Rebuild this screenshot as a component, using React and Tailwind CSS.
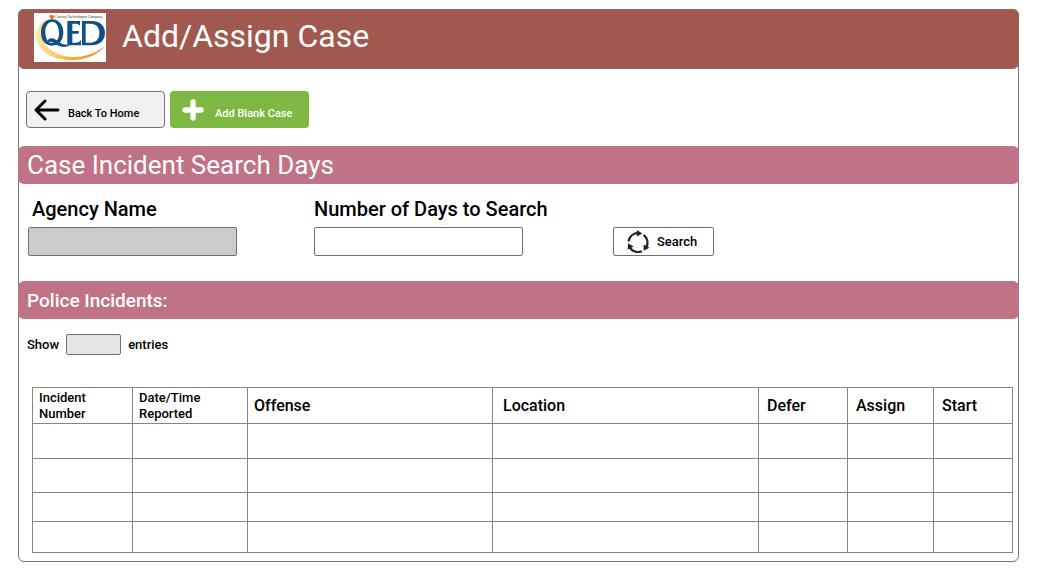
import React from "react";

function QedLogo() {
  return (
    <svg viewBox="0 0 216 147" className="h-[49px] w-[72px] shrink-0 bg-white" role="img" aria-label="QED, a Century Technologies Company">
      <defs>
        <linearGradient id="swoosh" x1="0" x2="1" y1="0" y2="0">
          <stop offset="0" stopColor="#fbe9a8" />
          <stop offset="0.5" stopColor="#f8b133" />
          <stop offset="1" stopColor="#ee7d22" />
        </linearGradient>
      </defs>
      <path d="M40 16C4 36-4 76 20 106c38 48 150 50 195-9-46 44-134 48-174 6C14 74 18 40 40 16Z" fill="url(#swoosh)" />
      <path d="M47 7c3-4 7-1 8 1 3-3 7-1 6 3-1 4-5 6-8 8-4-3-8-7-6-12Z" fill="#f0702a" />
      <text x="63" y="14" fontSize="10" fill="#333" fontFamily="Liberation Sans, sans-serif">Century Technologies Company</text>
      <path fillRule="evenodd" d="M54 19c21 0 34 17 34 39S76 98 54 98 21 80 21 58s12-39 33-39Zm-1 7c-13 3-20 15-19 33 1 19 9 32 22 31 13-2 20-14 19-33-1-18-9-32-22-31Z" fill="#124f86" />
      <path d="M50 76c16-2 22 14 40 18 8 2 14 1 20-1-10 12-29 10-41 3-11-7-17-11-28-9-1-6 3-10 9-11Z" fill="#124f86" />
      <path d="M100 24h38v14c-4-5-9-6-14-6h-9v22h19v8h-19v27h9c8 0 13-2 17-8v16h-41Z" fill="#124f86" />
      <path fillRule="evenodd" d="M144 24h29c27 0 40 15 40 36 0 22-15 37-42 37h-27Zm11 8v57h13c18 0 28-10 28-29 0-17-9-28-27-28Z" fill="#124f86" />
    </svg>
  );
}

function BackArrow() {
  return (
    <svg viewBox="0 0 26 22" className="h-[22px] w-[26px] shrink-0" fill="none" stroke="#000" strokeWidth="2.9" strokeLinecap="round" strokeLinejoin="round" aria-hidden="true">
      <path d="M24 11H2M11 2 2 11l9 9" />
    </svg>
  );
}

function Plus() {
  return (
    <svg viewBox="0 0 22 22" className="h-[22px] w-[22px] shrink-0" fill="none" stroke="#fff" strokeWidth="5.4" strokeLinecap="round" aria-hidden="true">
      <path d="M11 3v16M3 11h16" />
    </svg>
  );
}

function Cycle() {
  return (
    <svg viewBox="0 0 24 24" className="h-6 w-6 shrink-0" aria-hidden="true">
      {["rotate(0 12 12.5)", "rotate(120 12 12.5)", "rotate(240 12 12.5)"].map((turn) => (
        <g key={turn} transform={turn}>
          <path d="M2.6 11.5A9.6 9.6 0 0 1 12.5 2.9" fill="none" stroke="#222" strokeWidth="2.2" />
          <path d="M10.8 0 16.4 3.4 10.8 6.6Z" fill="#222" />
        </g>
      ))}
    </svg>
  );
}

const columns = [
  { name: "Incident Number", width: "w-[100px]", cell: "pl-[6px] text-[13px] leading-4" },
  { name: "Date/Time Reported", width: "w-[115px]", cell: "pl-[6px] text-[13px] leading-4" },
  { name: "Offense", width: "w-[245px]", cell: "pl-[6px] text-base" },
  { name: "Location", width: "", cell: "pl-[10px] text-base" },
  { name: "Defer", width: "w-[89px]", cell: "pl-[8px] text-base" },
  { name: "Assign", width: "w-[86px]", cell: "pl-[8px] text-base" },
  { name: "Start", width: "w-[79px]", cell: "pl-[8px] text-base" },
];

const rows = ["h-[35px]", "h-[34px]", "h-[29px]", "h-[31px]"];

export default function App() {
  return (
    <main className="min-h-screen bg-white pt-[9px] pr-[26px] pb-6 pl-[18px] font-['Roboto',sans-serif] font-medium text-black">
      <div className="rounded-md border border-[#777] pb-2">
        <header className="-mx-px -mt-px flex h-[60px] items-center gap-4 rounded-md border border-[#8f6a64] bg-[#a1584e] pb-1 pl-[15px]">
          <QedLogo />
          <h1 className="pb-[2px] text-[32px] leading-10 font-normal text-white">Add/Assign Case</h1>
        </header>

        <nav className="mt-[22px] flex gap-[5px] pl-[7px] text-[11px]">
          <button type="button" className="flex h-[37px] w-[139px] items-center gap-2 rounded border border-[#707070] bg-[#f1f1f1] pl-[7px]">
            <BackArrow />
            <span className="pt-[10px]">Back To Home</span>
          </button>
          <button type="button" className="flex h-[37px] w-[139px] items-center gap-[11px] rounded bg-[#7eb742] pl-3 text-white">
            <Plus />
            <span className="pt-[10px]">Add Blank Case</span>
          </button>
        </nav>

        <h2 className="-mx-px mt-[18px] flex h-[38px] items-center rounded-md bg-[#c07286] pl-[9px] text-[26px] font-normal text-white">
          Case Incident Search Days
        </h2>

        <form className="flex items-end pt-[13px] pl-[9px]" onSubmit={(e) => e.preventDefault()}>
          <div className="flex w-[286px] flex-col gap-[5px]">
            <label htmlFor="agency" className="pl-1 text-xl leading-[25px]">Agency Name</label>
            <input id="agency" type="text" className="h-[29px] w-[209px] rounded-xs border border-[#707070] bg-[#cbcbcb] px-2" />
          </div>
          <div className="flex w-[299px] flex-col gap-[5px]">
            <label htmlFor="days" className="text-xl leading-[25px]">Number of Days to Search</label>
            <input id="days" type="text" className="h-[29px] w-[209px] rounded-xs border border-[#707070] bg-white px-2" />
          </div>
          <button type="submit" className="flex h-[29px] w-[101px] items-center gap-[7px] rounded-xs border border-[#707070] bg-white pl-3 text-[13px]">
            <Cycle />
            Search
          </button>
        </form>

        <h2 className="-mx-px mt-[25px] flex h-[38px] items-center rounded-md bg-[#c07286] pt-[2px] pl-[9px] text-[19px] font-medium text-white">
          Police Incidents:
        </h2>

        <label className="mt-[15px] flex items-center gap-[7px] pl-2 text-[13px]">
          Show
          <select className="h-[21px] w-[55px] appearance-none rounded-xs border border-[#707070] bg-[#e5e5e5]" />
          entries
        </label>

        <div className="mt-8 pr-[5px] pl-[13px]">
          <table className="w-full table-fixed border-collapse">
            <thead>
              <tr className="h-9">
                {columns.map((c) => (
                  <th key={c.name} scope="col" className={`border border-[#858585] p-0 text-left font-medium ${c.width} ${c.cell}`}>
                    {c.name}
                  </th>
                ))}
              </tr>
            </thead>
            <tbody>
              {rows.map((height, i) => (
                <tr key={i} className={height}>
                  {columns.map((c) => (
                    <td key={c.name} className="border border-[#858585] p-0" />
                  ))}
                </tr>
              ))}
            </tbody>
          </table>
        </div>
      </div>
    </main>
  );
}
